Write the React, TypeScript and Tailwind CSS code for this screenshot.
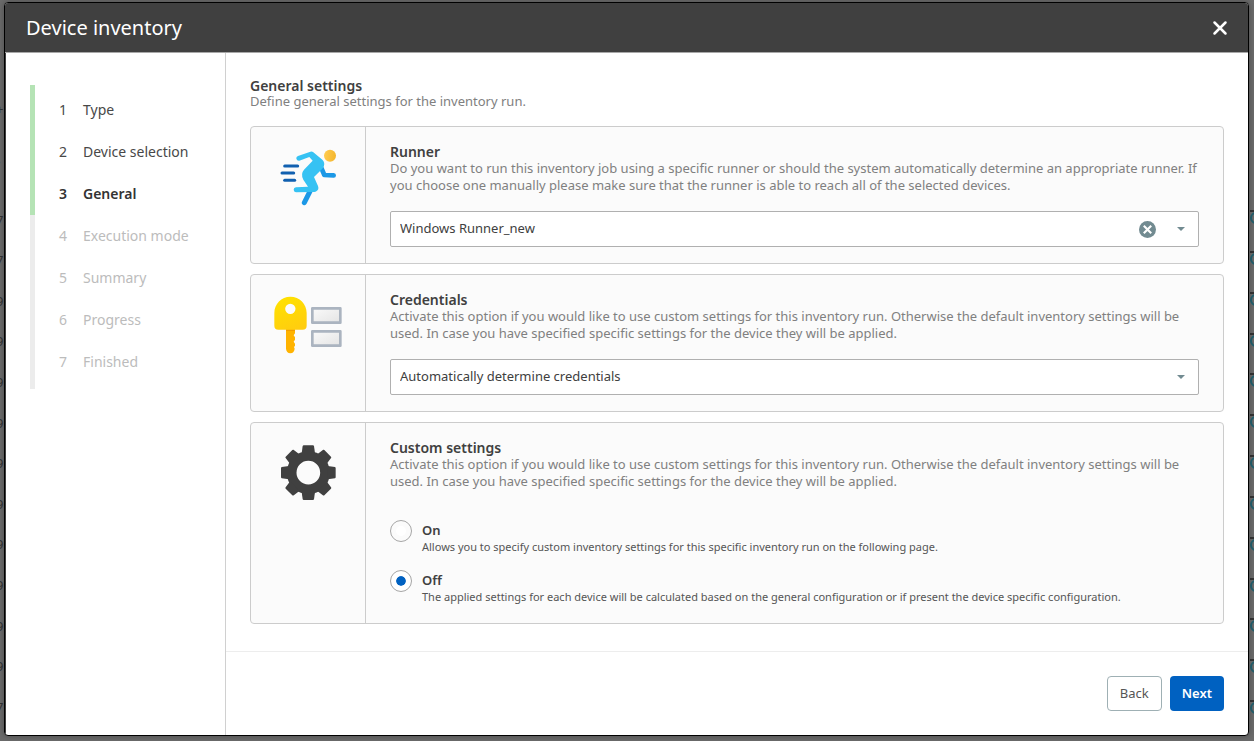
import React from 'react';

const STEPS = [
  'Type',
  'Device selection',
  'General',
  'Execution mode',
  'Summary',
  'Progress',
  'Finished',
];
const CURRENT_STEP = 2;

const RunnerIcon: React.FC = () => (
  <svg className="h-18 w-18" viewBox="66 39 216 216" fill="none" aria-hidden="true">
    <g stroke="#1160b0" strokeWidth="9" strokeLinecap="round">
      <path d="M104 120H143" />
      <path d="M96 141H131" />
      <path d="M104 163H134" />
    </g>
    <g stroke="#1c98e6" strokeWidth="14" strokeLinecap="round" strokeLinejoin="round">
      <path d="M214 126L223 147L251 148" />
      <path d="M181 194L163 230" strokeWidth="15" />
    </g>
    <path
      fill="#36c2f3"
      d="M179 78Q185 75 190 79L217 101Q226 110 221 122Q219 127 214 131L192 153L204 180Q208 191 199 196Q197 198 193 198L138 199Q131 198 131 191Q131 185 138 184L174 182L160 161Q151 144 162 131L188 104L178 93L148 104Q141 105 139 98Q138 92 144 90Z"
    />
    <circle cx="240" cy="89" r="18" fill="url(#head)" />
    <defs>
      <linearGradient id="head" x1="222" y1="89" x2="258" y2="95" gradientUnits="userSpaceOnUse">
        <stop stopColor="#ffcb4f" />
        <stop offset="1" stopColor="#f3b52c" />
      </linearGradient>
    </defs>
  </svg>
);

const KeyIcon: React.FC = () => (
  <svg className="h-18 w-18" viewBox="66 39 216 216" fill="none" aria-hidden="true">
    <path
      fill="#ffb300"
      d="M108 164H135V178L131 184L135 190V197L131 203L135 209V215L132 219L134 224Q133 236 121 238Q109 236 108 224Z"
    />
    <path fill="#f39c00" d="M108 166H135V171H108Z" />
    <path
      fill="url(#key)"
      fillRule="evenodd"
      d="M73 117C73 90 94 68 121 68C149 68 170 90 170 117V155Q170 167 158 167H85Q73 167 73 155ZM121 89A15.500 15.500 0 1 0 121 120A15.500 15.500 0 1 0 121 89Z"
    />
    <g fill="url(#field)" stroke="#abb4c0" strokeWidth="8" strokeLinejoin="round">
      <path d="M187 103H271V146H187Z" />
      <path d="M187 172H271V215H187Z" />
    </g>
    <defs>
      <linearGradient id="key" x1="100" y1="68" x2="140" y2="167" gradientUnits="userSpaceOnUse">
        <stop stopColor="#ffe100" />
        <stop offset="1" stopColor="#ffcd0f" />
      </linearGradient>
      <linearGradient id="field" x1="0" y1="0" x2="1" y2="1">
        <stop stopColor="#fafafa" />
        <stop offset="1" stopColor="#e4e4e4" />
      </linearGradient>
    </defs>
  </svg>
);

const GearIcon: React.FC = () => (
  <svg className="h-18 w-18" viewBox="66 39 216 216" aria-hidden="true">
    <circle cx="175" cy="152" r="50" fill="none" stroke="#404040" strokeWidth="29" />
    {[0, 45, 90, 135, 180, 225, 270, 315].map((angle) => (
      <path
        key={angle}
        fill="#404040"
        transform={`rotate(${angle} 175 152)`}
        d="M161 70H189Q191 70 192 72L195 94H155L158 72Q159 70 161 70Z"
      />
    ))}
  </svg>
);

interface CardProps {
  icon: React.ReactNode;
  title: string;
  text: string;
  children: React.ReactNode;
}

const SettingsCard: React.FC<CardProps> = ({ icon, title, text, children }) => (
  <section className="flex rounded border border-[#cccccc] bg-[#fbfbfb]">
    <div className="flex w-[115px] shrink-0 justify-center border-r border-[#cccccc] pt-3">
      {icon}
    </div>
    <div className="min-w-0 flex-1 px-6 py-4">
      <h3 className="text-sm leading-[17px] font-semibold text-[#404040]">{title}</h3>
      <p className="text-[13px] leading-[17px] text-[#808080]">{text}</p>
      {children}
    </div>
  </section>
);

interface SelectProps {
  label: string;
  options: string[];
  clearable?: boolean;
}

const SelectField: React.FC<SelectProps> = ({ label, options, clearable }) => (
  <div className="relative mt-[17px]">
    <select
      aria-label={label}
      className="block h-9 w-full appearance-none rounded-xs border border-[#b0b0b0] bg-white pr-20 pl-[9px] text-[13px] text-[#404040]"
    >
      {options.map((option) => (
        <option key={option}>{option}</option>
      ))}
    </select>
    <div className="pointer-events-none absolute inset-y-0 right-[13px] flex items-center gap-5">
      {clearable && (
        <button type="button" aria-label="Clear" className="pointer-events-auto">
          <svg className="block h-[17px] w-[17px]" viewBox="0 0 16 16">
            <circle cx="8" cy="8" r="8" fill="#728b91" />
            <path d="M4.500 4.500L11.500 11.500M11.500 4.500L4.500 11.500" stroke="#fff" strokeWidth="2" />
          </svg>
        </button>
      )}
      <svg className="h-2.5 w-2.5" viewBox="0 0 10 10">
        <path d="M1 3H9L5 7Z" fill="#728b91" />
      </svg>
    </div>
  </div>
);

interface RadioProps {
  title: string;
  text: string;
  checked?: boolean;
}

const RadioOption: React.FC<RadioProps> = ({ title, text, checked }) => (
  <label className="flex min-h-9 gap-2.5">
    <input
      type="radio"
      name="custom-settings"
      defaultChecked={checked}
      className="h-[22px] w-[22px] shrink-0 appearance-none rounded-full border border-[#a6a6a6] bg-white bg-clip-content p-[5px] checked:bg-[#0061c1] checked:shadow-[inset_0_0_0_5px_#fff]"
    />
    <span className="pt-0.5">
      <span className="block text-[13px] leading-[17px] font-semibold text-[#404040]">{title}</span>
      <span className="block text-[11px] leading-[15px] text-[#555555]">{text}</span>
    </span>
  </label>
);

// Dimmed page that shows around the edges of the dialog
const Backdrop: React.FC = () => (
  <div
    aria-hidden="true"
    className="absolute inset-0 flex justify-between overflow-hidden bg-[#6b6b6b] text-[13px] text-[#333333]"
  >
    <div className="flex w-1 flex-col overflow-hidden pt-[100px] pb-[13px]">
      <div className="-ml-1 h-[53px]">+</div>
      <div className="-ml-1 h-[47px]">•</div>
      {['7', '7', '9', '9', '9', '9', '9', '9', '9', '9', '9', '9', '7'].map((digit, index) => (
        <div key={index} className="-ml-1 flex flex-1 items-center">
          {digit}
        </div>
      ))}
    </div>
    <div className="flex w-1 flex-col overflow-hidden pt-[210px]">
      {Array.from({ length: 13 }, (_, index) => (
        <div key={index} className="flex-1 border-t-2 border-[#333333]">
          <div className="h-3 w-3 rounded-full border-2 border-[#22606e]" />
        </div>
      ))}
    </div>
  </div>
);

export default function App() {
  return (
    <div className="relative flex min-h-screen pt-0.5 pr-[5px] pb-[5px] pl-1 font-['Noto_Sans',sans-serif]">
      <Backdrop />
      <div
        role="dialog"
        aria-labelledby="dialog-title"
        className="relative flex flex-1 flex-col overflow-hidden rounded border border-black bg-white shadow-[0_0_6px_rgba(0,0,0,0.3)]"
      >
        <header className="flex h-[50px] items-center justify-between border-b border-[#a8a8a8] bg-[#404040] pr-5 pl-[21px] text-white">
          <h1 id="dialog-title" className="text-xl">
            Device inventory
          </h1>
          <button type="button" aria-label="Close">
            <svg className="block h-4 w-4" viewBox="0 0 16 16" fill="none">
              <path d="M2.500 2.500L13.500 13.500M13.500 2.500L2.500 13.500" stroke="#fff" strokeWidth="2.500" strokeLinecap="round" />
            </svg>
          </button>
        </header>

        <div className="flex flex-1 border-l border-[#404040]">
          <nav className="w-[220px] shrink-0 border-r border-[#d0d0d0] px-6 pt-8">
            <ol className="flex">
              <li className="flex w-[5px] flex-col bg-[#ececec]" aria-hidden="true">
                <span className="h-[130px] bg-[#b5e3b5]" />
              </li>
              <li className="flex-1 pt-1 pb-1.5">
                <ol>
                  {STEPS.map((step, index) => (
                    <li
                      key={step}
                      className={
                        index === CURRENT_STEP
                          ? 'flex h-[42px] items-center pl-6 text-sm font-semibold text-[#333333]'
                          : index < CURRENT_STEP
                            ? 'flex h-[42px] items-center pl-6 text-sm text-[#484848]'
                            : 'flex h-[42px] items-center pl-6 text-sm text-[#bcbcbc]'
                      }
                    >
                      <span className="w-6">{index + 1}</span>
                      <span>{step}</span>
                    </li>
                  ))}
                </ol>
              </li>
            </ol>
          </nav>

          <div className="flex min-w-0 flex-1 flex-col">
            <main className="flex-1 px-6 pt-6">
              <h2 className="text-sm leading-[17px] font-semibold text-[#404040]">
                General settings
              </h2>
              <p className="text-[13px] leading-[15px] text-[#808080]">
                Define general settings for the inventory run.
              </p>

              <div className="mt-[17px] flex flex-col gap-2.5">
                <SettingsCard
                  icon={<RunnerIcon />}
                  title="Runner"
                  text="Do you want to run this inventory job using a specific runner or should the system automatically determine an appropriate runner. If you choose one manually please make sure that the runner is able to reach all of the selected devices."
                >
                  <SelectField label="Runner" options={['Windows Runner_new']} clearable />
                </SettingsCard>

                <SettingsCard
                  icon={<KeyIcon />}
                  title="Credentials"
                  text="Activate this option if you would like to use custom settings for this inventory run. Otherwise the default inventory settings will be used. In case you have specified specific settings for the device they will be applied."
                >
                  <SelectField
                    label="Credentials"
                    options={['Automatically determine credentials']}
                  />
                </SettingsCard>

                <SettingsCard
                  icon={<GearIcon />}
                  title="Custom settings"
                  text="Activate this option if you would like to use custom settings for this inventory run. Otherwise the default inventory settings will be used. In case you have specified specific settings for the device they will be applied."
                >
                  <div className="mt-[30px] flex flex-col gap-3.5 pb-px">
                    <RadioOption
                      title="On"
                      text="Allows you to specify custom inventory settings for this specific inventory run on the following page."
                    />
                    <RadioOption
                      title="Off"
                      text="The applied settings for each device will be calculated based on the general configuration or if present the device specific configuration."
                      checked
                    />
                  </div>
                </SettingsCard>
              </div>
            </main>

            <footer className="flex justify-end gap-2 border-t border-[#ededed] p-6">
              <button
                type="button"
                className="h-[35px] rounded border border-[#9fb0b4] bg-white px-3 text-[13px] text-[#555555]"
              >
                Back
              </button>
              <button
                type="button"
                className="h-[35px] rounded bg-[#0061c1] px-3 text-[13px] font-semibold text-white"
              >
                Next
              </button>
            </footer>
          </div>
        </div>
      </div>
    </div>
  );
}
